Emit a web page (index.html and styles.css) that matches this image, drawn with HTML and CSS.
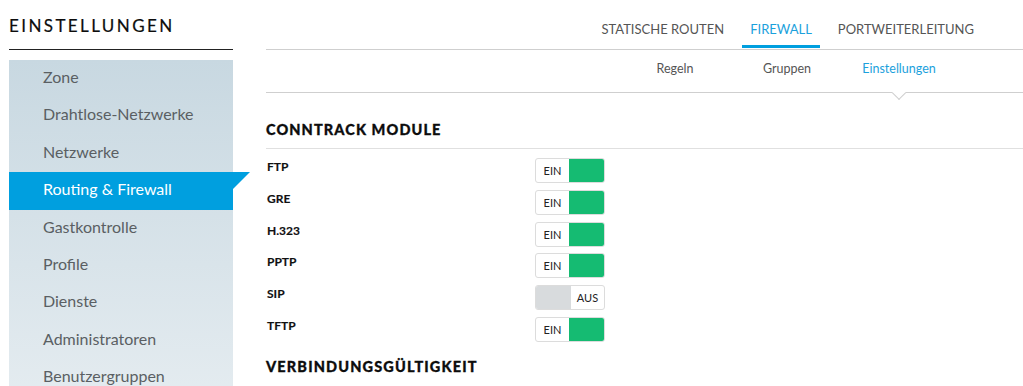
FILE: index.html
```html
<!DOCTYPE html>
<html lang="de">
<head>
<meta charset="utf-8">
<title>Einstellungen</title>
<link rel="stylesheet" href="styles.css">
</head>
<body>
<div class="page">
  <aside class="sidebar">
    <h1 class="side-title">EINSTELLUNGEN</h1>
    <ul class="nav">
      <li class="nav-item">Zone</li>
      <li class="nav-item">Drahtlose-Netzwerke</li>
      <li class="nav-item">Netzwerke</li>
      <li class="nav-item active">Routing &amp; Firewall</li>
      <li class="nav-item">Gastkontrolle</li>
      <li class="nav-item">Profile</li>
      <li class="nav-item">Dienste</li>
      <li class="nav-item">Administratoren</li>
      <li class="nav-item">Benutzergruppen</li>
    </ul>
  </aside>
  <main class="main">
    <nav class="tabs">
      <span class="tab">STATISCHE ROUTEN</span>
      <span class="tab active">FIREWALL</span>
      <span class="tab">PORTWEITERLEITUNG</span>
    </nav>
    <nav class="subtabs">
      <span class="subtab">Regeln</span>
      <span class="subtab">Gruppen</span>
      <span class="subtab active">Einstellungen</span>
    </nav>
    <section class="section">
      <h2 class="section-title">CONNTRACK MODULE</h2>
      <div class="rows">
        <div class="row"><span class="row-label">FTP</span><span class="toggle on"><span class="toggle-text">EIN</span><span class="thumb"></span></span></div>
        <div class="row"><span class="row-label">GRE</span><span class="toggle on"><span class="toggle-text">EIN</span><span class="thumb"></span></span></div>
        <div class="row"><span class="row-label">H.323</span><span class="toggle on"><span class="toggle-text">EIN</span><span class="thumb"></span></span></div>
        <div class="row"><span class="row-label">PPTP</span><span class="toggle on"><span class="toggle-text">EIN</span><span class="thumb"></span></span></div>
        <div class="row"><span class="row-label">SIP</span><span class="toggle off"><span class="thumb"></span><span class="toggle-text">AUS</span></span></div>
        <div class="row"><span class="row-label">TFTP</span><span class="toggle on"><span class="toggle-text">EIN</span><span class="thumb"></span></span></div>
      </div>
    </section>
    <section class="section second">
      <h2 class="section-title plain wide">VERBINDUNGSGÜLTIGKEIT</h2>
    </section>
  </main>
</div>
</body>
</html>
```

FILE: styles.css
```css
html, body {
  margin: 0;
  padding: 0;
  background: #ffffff;
}
body {
  font-family: Lato, "Open Sans", "Liberation Sans", sans-serif;
  color: #333;
  overflow: hidden;
}
.page {
  display: flex;
  padding-left: 9px;
  height: 386px;
}
.sidebar {
  width: 224px;
  flex: none;
}
.side-title {
  margin: 0;
  padding: 15px 0 13px;
  font-size: 17px;
  line-height: 21px;
  font-weight: 400;
  letter-spacing: 2.4px;
  color: #0d0d0d;
  -webkit-text-stroke: 0.2px #0d0d0d;
  border-bottom: 1px solid #222;
}
.nav {
  list-style: none;
  margin: 10px 0 0;
  padding: 0;
  background: linear-gradient(#c8d8e1, #e6edf1 360px);
}
.nav-item {
  position: relative;
  height: 37.4px;
  line-height: 34px;
  padding-left: 34px;
  font-size: 16px;
  color: #5a5f63;
}
.nav-item.active {
  background: #009fdf;
  color: #ffffff;
}
.nav-item.active::after {
  content: "";
  position: absolute;
  top: 0;
  left: 100%;
  width: 0;
  height: 0;
  border-top: 17px solid #009fdf;
  border-right: 17px solid transparent;
}
.main {
  flex: 1;
  margin-left: 33px;
}
.tabs {
  display: flex;
  justify-content: flex-end;
  gap: 10px;
  padding-right: 41px;
  padding-bottom: 1px;
  border-bottom: 1px solid #cfcfcf;
}
.tab {
  padding: 21px 8px 8px;
  font-size: 13px;
  line-height: 16px;
  color: #555;
  border-bottom: 3px solid transparent;
}
.tab.active {
  color: #1ba1dc;
  border-bottom-color: #009fdf;
}
.subtabs {
  display: flex;
  justify-content: flex-end;
  padding-right: 68px;
  border-bottom: 1px solid #cfcfcf;
}
.subtab {
  position: relative;
  width: 112px;
  text-align: center;
  padding: 11px 0 16px;
  font-size: 12.5px;
  line-height: 15px;
  color: #555;
}
.subtab.active {
  color: #1ba1dc;
}
.subtab.active::after {
  content: "";
  position: absolute;
  left: 50%;
  bottom: -5.5px;
  width: 9px;
  height: 9px;
  margin-left: -5px;
  background: #fff;
  border-right: 1px solid #cfcfcf;
  border-bottom: 1px solid #cfcfcf;
  transform: rotate(45deg);
}
.section {
  margin-top: 28px;
}
.section.second {
  margin-top: 9px;
}
.section-title {
  margin: 0;
  padding-bottom: 10px;
  font-family: "Lato Black", Lato, sans-serif;
  font-size: 14.5px;
  line-height: 17px;
  font-weight: 900;
  letter-spacing: 1.1px;
  color: #0d0d0d;
  -webkit-text-stroke: 0.3px #0d0d0d;
  border-bottom: 1px solid #e0e0e0;
}
.section-title.plain {
  border-bottom: none;
}
.section-title.wide {
  letter-spacing: 1.15px;
}
.rows {
  padding-top: 9px;
}
.row {
  display: flex;
  align-items: flex-start;
  height: 31.8px;
}
.row-label {
  width: 268px;
  padding-left: 1px;
  font-size: 12px;
  line-height: 17px;
  font-weight: 700;
  color: #111;
  -webkit-text-stroke: 0.15px #111;
}
.toggle {
  display: flex;
  box-sizing: border-box;
  width: 70px;
  height: 25px;
  border: 1px solid #dcdcdc;
  border-radius: 3px;
  overflow: hidden;
}
.toggle-text {
  flex: 1;
  text-align: center;
  font-size: 11px;
  line-height: 23px;
  color: #222;
}
.thumb {
  width: 36px;
  flex: none;
}
.toggle.on .thumb {
  background: #15bb72;
  margin: -1px -1px -1px 0;
  border-radius: 0 3px 3px 0;
}
.toggle.off .thumb {
  background: #d8dbdd;
  margin: -1px 0 -1px -1px;
  border-radius: 3px 0 0 3px;
}
```
